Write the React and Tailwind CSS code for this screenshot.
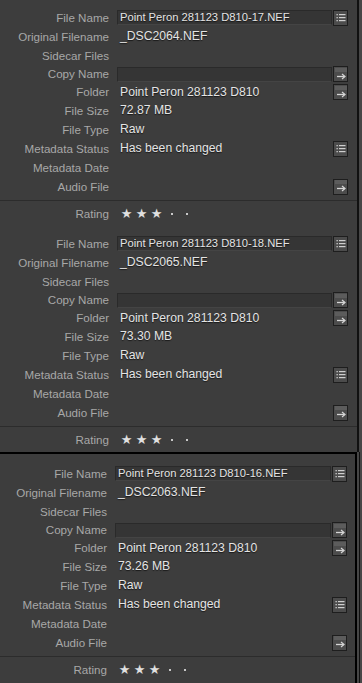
import React from "react";

const LIST = "list";
const ARROW = "arrow";

function ListIcon() {
  return (
    <svg width="12" height="13" viewBox="0 0 12 13" className="block">
      <rect x="1.5" y="3" width="1.3" height="1.3" fill="#cfcfcf" />
      <rect x="1.5" y="6" width="1.3" height="1.3" fill="#cfcfcf" />
      <rect x="1.5" y="9" width="1.3" height="1.3" fill="#cfcfcf" />
      <rect x="4" y="3" width="6.5" height="1.2" fill="#cfcfcf" />
      <rect x="4" y="6" width="6.5" height="1.2" fill="#cfcfcf" />
      <rect x="4" y="9" width="6.5" height="1.2" fill="#cfcfcf" />
    </svg>
  );
}

function ArrowIcon() {
  return (
    <svg width="12" height="13" viewBox="0 0 12 13" className="block">
      <rect x="0" y="0" width="12" height="4" fill="#5c5c5c" />
      <path d="M2 8.5 H9.5" stroke="#d6d6d6" strokeWidth="1.3" />
      <path d="M7 6 L10 8.5 L7 11" stroke="#d6d6d6" strokeWidth="1.2" fill="none" />
    </svg>
  );
}

function Btn({ type }) {
  return (
    <div className="w-[15px] h-[16px] shrink-0 border border-[#1e1e1e] bg-[#4c4c4c] flex items-center justify-center">
      {type === LIST ? <ListIcon /> : <ArrowIcon />}
    </div>
  );
}

function Stars() {
  return (
    <div className="flex items-center ml-[2px]">
      {[0, 1, 2].map((i) => (
        <span
          key={i}
          className="w-[15px] text-center text-[13px] leading-none text-[#e0e0e0] [font-family:'DejaVu_Sans',sans-serif]"
        >
          ★
        </span>
      ))}
      {[0, 1].map((i) => (
        <span key={"d" + i} className="w-[15px] flex justify-center">
          <span className="block w-[2px] h-[2px] bg-[#c8c8c8]" />
        </span>
      ))}
    </div>
  );
}

function Panel({ d, third }) {
  const labelW = third ? "w-[107px]" : "w-[109px]";
  const pr = third ? "pr-[8px]" : "pr-[9px]";
  const rows = [
    { l: "File Name", v: d.name, box: true, btn: LIST, h: "h-[19px]" },
    { l: "Original Filename", v: d.orig, h: "h-[19px]" },
    { l: "Sidecar Files", v: "", h: "h-[19px]" },
    { l: "Copy Name", v: "", box: true, btn: ARROW, h: "h-[18px]" },
    { l: "Folder", v: "Point Peron 281123 D810", btn: ARROW, h: "h-[18px]" },
    { l: "File Size", v: d.size, h: "h-[19px]" },
    { l: "File Type", v: "Raw", h: "h-[19px]" },
    { l: "Metadata Status", v: "Has been changed", btn: LIST, h: "h-[19px]" },
    { l: "Metadata Date", v: "", h: "h-[19px]" },
    { l: "Audio File", v: "", btn: ARROW, h: "h-[19px]" },
  ];
  return (
    <div
      className={
        "flex flex-col " +
        (third ? "border-t-2 border-black pt-[10px]" : "pt-[8px]")
      }
    >
      <div className={"flex flex-col pb-[4px] " + pr}>
        {rows.map((r) => (
          <div key={r.l} className={"flex items-center " + r.h}>
            <div
              className={
                labelW +
                " shrink-0 text-right text-[11.6px] text-[#a8a8a8] leading-none"
              }
            >
              {r.l}
            </div>
            <div className="ml-[8px] flex-1 flex items-center gap-[1px] min-w-0">
              {r.box ? (
                <div className="flex-1 h-[15px] bg-[#353535] border border-[#2a2a2a] border-b-[#444] flex items-center pl-[2px] text-[11.2px] text-[#e4e4e4] leading-none whitespace-nowrap overflow-hidden [text-shadow:0_1px_1px_rgba(0,0,0,0.6)]">
                  {r.v}
                </div>
              ) : (
                <div className="flex-1 pl-[3px] text-[12.2px] text-[#e4e4e4] leading-none whitespace-nowrap [text-shadow:0_1px_1px_rgba(0,0,0,0.6)]">
                  {r.v}
                </div>
              )}
              {r.btn ? <Btn type={r.btn} /> : null}
            </div>
          </div>
        ))}
      </div>
      <div className="h-[1px] bg-[#2c2c2c]" />
      <div className={"flex items-center h-[25px] " + pr}>
        <div
          className={
            labelW +
            " shrink-0 text-right text-[11.6px] text-[#a8a8a8] leading-none"
          }
        >
          Rating
        </div>
        <div className="ml-[8px]">
          <Stars />
        </div>
      </div>
    </div>
  );
}

export default function App() {
  const data = [
    { name: "Point Peron 281123 D810-17.NEF", orig: "_DSC2064.NEF", size: "72.87 MB" },
    { name: "Point Peron 281123 D810-18.NEF", orig: "_DSC2065.NEF", size: "73.30 MB" },
    { name: "Point Peron 281123 D810-16.NEF", orig: "_DSC2063.NEF", size: "73.26 MB" },
  ];
  return (
    <div className="w-[362px] h-[683px] overflow-hidden bg-[#3d3d3d] [font-family:'Liberation_Sans',Arial,sans-serif] flex flex-col">
      <div className="flex">
        <div className="w-[357px] flex flex-col">
          <Panel d={data[0]} />
          <Panel d={data[1]} />
        </div>
        <div className="w-[2px] bg-[#111]" />
        <div className="flex-1 bg-[#474747]" />
      </div>
      <div className="flex flex-1">
        <div className="w-[355px]">
          <Panel d={data[2]} third />
        </div>
        <div className="w-[2px] bg-black" />
        <div className="w-[2px] bg-[#474747]" />
        <div className="w-[1px] bg-[#111]" />
        <div className="flex-1 bg-[#474747]" />
      </div>
    </div>
  );
}
